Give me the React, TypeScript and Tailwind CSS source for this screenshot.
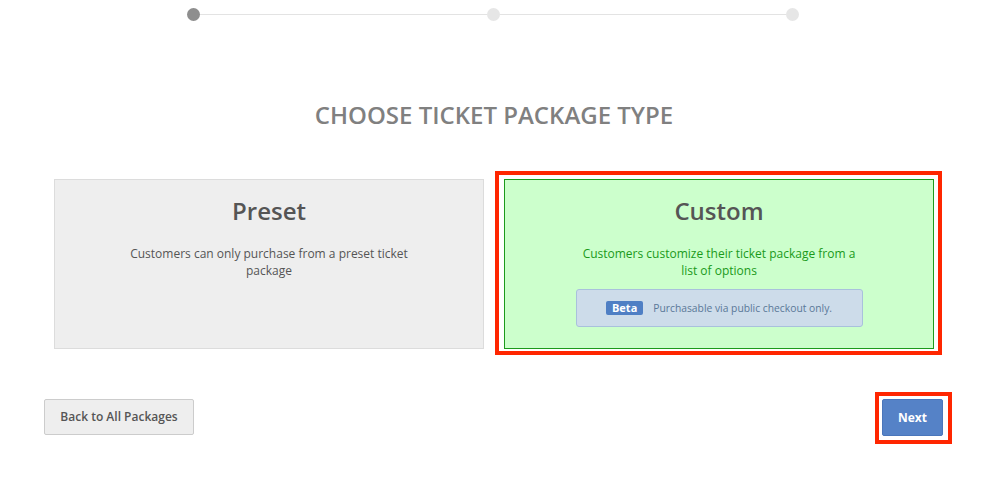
import React from "react"

const steps = [true, false, false]

function Stepper() {
  return (
    <div className="mx-auto flex w-[612px] -translate-x-[1px] items-center pt-[8px]">
      {steps.map((done, i) => (
        <React.Fragment key={i}>
          {i > 0 && <div className="h-px flex-1 bg-[#e3e3e3]" />}
          <div
            className={
              done
                ? "h-[13px] w-[13px] shrink-0 rounded-full bg-[#8e8e8e]"
                : "h-[13px] w-[13px] shrink-0 rounded-full bg-[#e6e6e6]"
            }
          />
        </React.Fragment>
      ))}
    </div>
  )
}

function PresetCard() {
  return (
    <div className="flex h-[170px] w-[430px] flex-col items-center border border-[#dcdcdc] bg-[#eeeeee] pt-[15px] text-[#555555]">
      <h2 className="text-[24px] font-semibold leading-[32px]">Preset</h2>
      <p className="mt-[18px] w-[286px] text-center text-[12px] leading-[17px]">
        Customers can only purchase from a preset ticket package
      </p>
    </div>
  )
}

function CustomCard() {
  return (
    <div className="relative">
      <div className="flex h-[170px] w-[430px] flex-col items-center border border-[#1c9a1c] bg-[#ccffcc] pt-[15px]">
        <h2 className="text-[24px] font-semibold leading-[32px] text-[#555555]">Custom</h2>
        <p className="mt-[18px] w-[286px] text-center text-[12px] leading-[17px] text-[#1a9a1a]">
          Customers customize their ticket package from a list of options
        </p>
        <div className="mt-[10px] flex h-[38px] w-[287px] items-center justify-center gap-[10px] rounded-[3px] border border-[#a9c1dc] bg-[#cddcea]">
          <span className="rounded-[2px] bg-[#4f7fc4] px-[6px] text-[11px] font-bold leading-[14px] text-white">
            Beta
          </span>
          <span className="text-[10.3px] leading-[14px] text-[#5a7898]">
            Purchasable via public checkout only.
          </span>
        </div>
      </div>
      <div className="pointer-events-none absolute -bottom-[6px] -left-[9px] -right-[8px] -top-[8px] border-4 border-[#ff2600]" />
    </div>
  )
}

export default function App() {
  return (
    <div className="min-h-[488px] w-full bg-white font-['Open_Sans',sans-serif]">
      <div className="ml-[44px] w-[900px]">
        <Stepper />
        <h1 className="mt-[78px] text-center text-[24px] font-semibold uppercase leading-[32px] text-[#808080]">
          Choose Ticket Package Type
        </h1>
        <div className="mt-[48px] flex gap-[20px] pl-[10px]">
          <PresetCard />
          <CustomCard />
        </div>
        <div className="mt-[50px] flex items-start justify-between pr-[1px]">
          <button className="h-[36px] w-[150px] rounded-[2px] border border-[#cccccc] bg-[#eeeeee] text-[12px] font-semibold text-[#555555]">
            Back to All Packages
          </button>
          <div className="relative">
            <button className="h-[37px] w-[61px] rounded-[2px] border border-[#4a76bb] bg-[#5582c7] text-[12px] font-bold text-white">
              Next
            </button>
            <div className="pointer-events-none absolute -bottom-[8px] -left-[7px] -right-[9px] -top-[7px] border-4 border-[#ff2600]" />
          </div>
        </div>
      </div>
    </div>
  )
}
